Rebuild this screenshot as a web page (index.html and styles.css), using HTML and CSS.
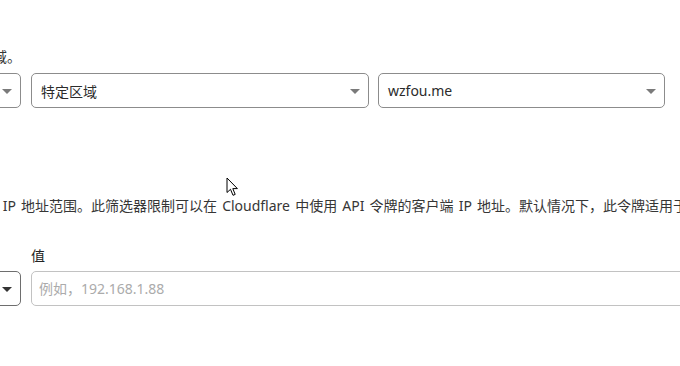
FILE: index.html
```html
<!DOCTYPE html>
<html lang="zh-CN">
<head>
    <meta charset="UTF-8">
    <meta name="viewport" content="width=device-width, initial-scale=1.0">
    <title>区域资源</title>
    <link rel="stylesheet" href="styles.css">
</head>
<body>

    <div class="page">
        <!-- Zone resources -->
        <p class="hint">请选择令牌将包含在内的特定区域。</p>

        <div class="row">
            <div class="select select-include">
                <span>包括</span>
                <i class="caret"></i>
            </div>
            <div class="select select-scope">
                <span>特定区域</span>
                <i class="caret"></i>
            </div>
            <div class="select select-zone">
                <span>wzfou.me</span>
                <i class="caret"></i>
            </div>
        </div>

        <!-- Client IP filtering -->
        <p class="desc">选择要包括或排除的 IP 地址或 IP 地址范围。此筛选器限制可以在 Cloudflare 中使用 API 令牌的客户端 IP 地址。默认情况下，此令牌适用于所有地址。</p>

        <div class="row">
            <div class="field field-op">
                <label>运算符</label>
                <div class="select select-include dark">
                    <span>在范围内</span>
                    <i class="caret"></i>
                </div>
            </div>
            <div class="field field-value">
                <label>值</label>
                <input class="text-input" type="text" placeholder="例如，192.168.1.88">
            </div>
        </div>
    </div>

    <!-- mouse pointer -->
    <svg class="pointer" width="13" height="20" viewBox="0 0 13 20">
        <path d="M1 1 L1 15.5 L4.5 12.3 L7 18.3 L9.2 17.4 L6.8 11.6 L11.4 11.6 Z" fill="#fff" stroke="#000" stroke-width="1" stroke-linejoin="round"/>
    </svg>

</body>
</html>
```

FILE: styles.css
```css
* {
    box-sizing: border-box;
}

body {
    margin: 0;
    overflow: hidden;
    background-color: #fff;
    color: #363636;
    font-family: "Noto Sans", "Noto Sans CJK SC", sans-serif;
    font-size: 14px;
}

/* the form is scrolled sideways, its left part is off screen */
.page {
    margin-left: -203px;
    padding-top: 47px;
}

.hint {
    margin: 0 0 6px;
    line-height: 20px;
    white-space: nowrap;
}

.row {
    display: flex;
    align-items: flex-end;
}

.select {
    position: relative;
    height: 35px;
    display: flex;
    align-items: center;
    padding: 0 30px 0 9px;
    border: 1px solid #8c8c8c;
    border-radius: 5px;
    color: #2b2b2b;
    white-space: nowrap;
}

.select-include {
    width: 224px;
    margin-right: 10px;
}

.select-scope {
    width: 338px;
    margin-right: 9px;
}

.select-zone {
    width: 287px;
}

/* little triangle on the right of a select */
.caret {
    position: absolute;
    right: 8px;
    top: 15px;
    width: 0;
    height: 0;
    border-left: 5px solid transparent;
    border-right: 5px solid transparent;
    border-top: 5px solid #7a7a7a;
}

.select.dark {
    border-color: #6e6e6e;
}

.select.dark .caret {
    border-top-color: #333;
}

.desc {
    margin: 88px 0 30px;
    line-height: 20px;
    white-space: nowrap;
    text-indent: 9px;
    word-spacing: 1.5px;
}

.field label {
    display: block;
    line-height: 20px;
    margin-bottom: 5px;
    color: #222;
}

.field-op .select {
    margin-right: 0;
}

.field-op {
    margin-right: 10px;
}

.field-op label {
    padding-left: 10px;
}

.text-input {
    width: 720px;
    height: 35px;
    padding: 0 7px;
    border: 1px solid #c2c2c2;
    border-radius: 5px;
    font-family: inherit;
    font-size: 14px;
    color: #313131;
    outline: none;
}

.text-input::placeholder {
    color: #ababab;
}

.pointer {
    position: absolute;
    left: 226px;
    top: 177px;
}
```
